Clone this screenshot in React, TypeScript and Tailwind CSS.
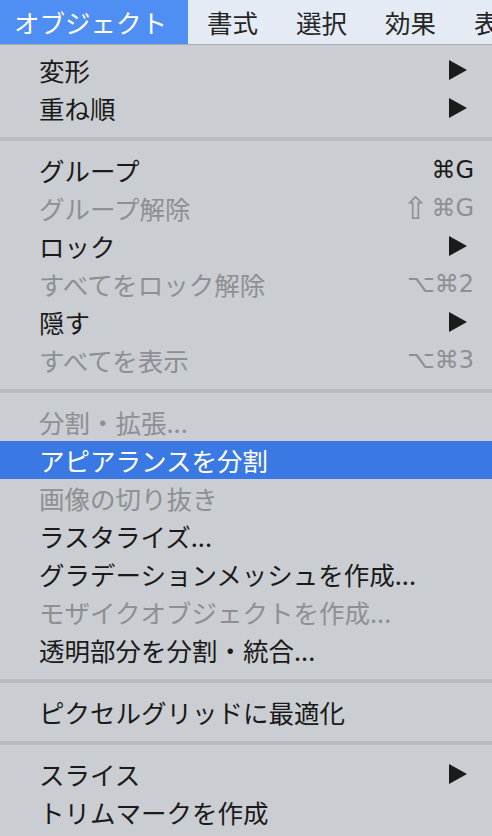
const font = { fontFamily: '"Noto Sans CJK JP", "Noto Sans", sans-serif' };

type Item =
  | { kind: "sep" }
  | { kind: "item"; label: string; disabled?: boolean; active?: boolean; sub?: boolean; key?: string };

const items: Item[] = [
  { kind: "item", label: "変形", sub: true },
  { kind: "item", label: "重ね順", sub: true },
  { kind: "sep" },
  { kind: "item", label: "グループ", key: "⌘G" },
  { kind: "item", label: "グループ解除", disabled: true, key: "⇧⌘G" },
  { kind: "item", label: "ロック", sub: true },
  { kind: "item", label: "すべてをロック解除", disabled: true, key: "⌥⌘2" },
  { kind: "item", label: "隠す", sub: true },
  { kind: "item", label: "すべてを表示", disabled: true, key: "⌥⌘3" },
  { kind: "sep" },
  { kind: "item", label: "分割・拡張...", disabled: true },
  { kind: "item", label: "アピアランスを分割", active: true },
  { kind: "item", label: "画像の切り抜き", disabled: true },
  { kind: "item", label: "ラスタライズ..." },
  { kind: "item", label: "グラデーションメッシュを作成..." },
  { kind: "item", label: "モザイクオブジェクトを作成...", disabled: true },
  { kind: "item", label: "透明部分を分割・統合..." },
  { kind: "sep" },
  { kind: "item", label: "ピクセルグリッドに最適化" },
  { kind: "sep" },
  { kind: "item", label: "スライス", sub: true },
  { kind: "item", label: "トリムマークを作成" },
];

const Arrow = () => (
  <svg width="18" height="20" viewBox="0 0 18 20" className="mr-[7px]">
    <polygon points="0,0 18,10 0,20" fill="#1b1b1b" />
  </svg>
);

// shortcut keys; the shift glyph is drawn larger, as in the macOS menu font
const Shortcut = ({ keys, color }: { keys: string; color: string }) => (
  <span
    className={`flex items-center leading-none text-[24px] ${color}`}
    style={{ fontFamily: '"DejaVu Sans", "Liberation Sans", sans-serif' }}
  >
    {keys.split("").map((k, i) =>
      k === "⇧" ? (
        <span key={i} className="text-[31px] mr-[3px]">
          {k}
        </span>
      ) : (
        <span key={i}>{k}</span>
      )
    )}
  </span>
);

const Row = ({ item }: { item: Extract<Item, { kind: "item" }> }) => {
  const color = item.active ? "text-white" : item.disabled ? "text-[#8d8f93]" : "text-[#1a1a1a]";
  return (
    <div className={`flex items-center h-[38px] pl-[39px] pr-[18px] ${item.active ? "bg-[#3a79e3]" : ""}`}>
      <span className={`flex-1 text-[25.5px] leading-none ${color}`}>{item.label}</span>
      {item.sub && <Arrow />}
      {item.key && <Shortcut keys={item.key} color={color} />}
    </div>
  );
};

export default function App() {
  return (
    <div className="w-[492px] h-[836px] overflow-hidden bg-[#cacdd1]" style={font}>
      {/* menu bar */}
      <div className="flex h-[45px] bg-[#e4ebf4] border-b border-[#a9acb0] whitespace-nowrap text-[25.5px]">
        <div className="flex items-center w-[188px] shrink-0 pl-[14px] bg-[#4f8ef2] text-white">オブジェクト</div>
        <div className="flex items-center px-[19px] text-[#262626]">書式</div>
        <div className="flex items-center px-[19px] text-[#262626]">選択</div>
        <div className="flex items-center px-[19px] text-[#262626]">効果</div>
        <div className="flex items-center pl-[19px] text-[#262626]">表</div>
      </div>

      {/* dropdown */}
      <div className="pt-[6px] whitespace-nowrap">
        {items.map((it, i) =>
          it.kind === "sep" ? (
            <div key={i} className="h-[24px] pt-[10px]">
              <div className="h-[4px] bg-[#b9bbbe]" />
            </div>
          ) : (
            <Row key={i} item={it} />
          )
        )}
      </div>
    </div>
  );
}
